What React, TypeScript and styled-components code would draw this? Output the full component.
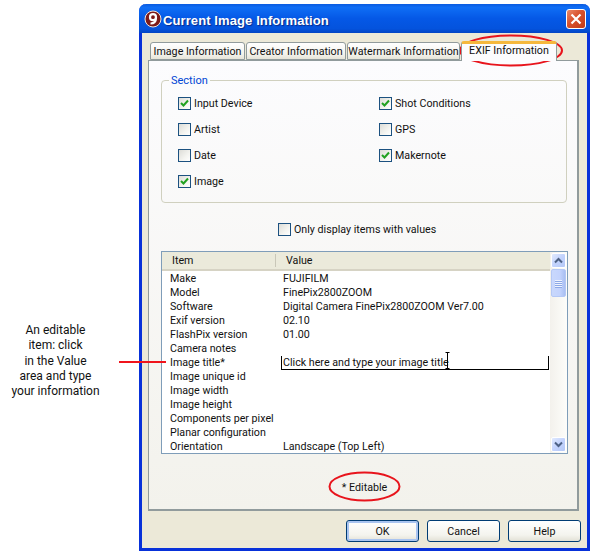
import React from "react";
import styled, { createGlobalStyle } from "styled-components";

const GlobalStyle = createGlobalStyle`
  html, body {
    margin: 0;
    padding: 0;
    background: #fff;
  }
  body {
    font-family: Roboto, "Liberation Sans", Arial, sans-serif;
    font-size: 10.7px;
    color: #111;
  }
`;

const Page = styled.div`
  position: relative;
  width: 594px;
  height: 555px;
  overflow: hidden;
  display: flex;
  padding: 4px 4px 4px 0;
  box-sizing: border-box;
`;

const Note = styled.div`
  width: 111px;
  margin-top: 319px;
  margin-right: 28px;
  flex: none;
  text-align: center;
  line-height: 15.3px;
  font-size: 12px;
`;

const Window = styled.div`
  width: 451px;
  height: 547px;
  flex: none;
  box-sizing: border-box;
  background: #ece9d8;
  border: solid #0831d9;
  border-width: 0 3px 3px 3px;
  border-radius: 7px 7px 0 0;
  display: flex;
  flex-direction: column;
`;

const TitleBar = styled.div`
  height: 29px;
  margin: 0 -3px;
  padding: 0 4px 0 5px;
  border-radius: 7px 7px 0 0;
  background: linear-gradient(180deg, #0a5be0 0%, #0f6ef5 12%, #0558e6 50%, #0453dd 85%, #0345c4 100%);
  display: flex;
  align-items: center;
  gap: 1px;
  flex: none;
`;

const TitleText = styled.span`
  flex: 1;
  padding-top: 3px;
  color: #fff;
  font-family: "Liberation Sans", Arial, sans-serif;
  font-weight: bold;
  font-size: 13px;
  letter-spacing: 0.1px;
  text-shadow: 1px 1px 1px #0a2a8a;
`;

const CloseButton = styled.div`
  width: 20px;
  height: 20px;
  box-sizing: border-box;
  border: 1px solid #fff;
  border-radius: 3px;
  background: linear-gradient(135deg, #ea8a6b 0%, #d9512c 45%, #c03a18 100%);
  display: flex;
  align-items: center;
  justify-content: center;
`;

const Content = styled.div`
  flex: 1;
  padding: 8px 6px 0 6px;
  display: flex;
  flex-direction: column;
`;

const TabRow = styled.div`
  display: flex;
  padding-left: 2px;
  gap: 1px;
  height: 19px;
  align-items: flex-end;
  position: relative;
  z-index: 1;
`;

const Tab = styled.div<{ $width: number; $active?: boolean }>`
  width: ${(p) => p.$width}px;
  height: ${(p) => (p.$active ? 20 : 18)}px;
  margin-bottom: ${(p) => (p.$active ? -1 : 0)}px;
  padding-top: ${(p) => (p.$active ? 0 : 1)}px;
  padding-bottom: ${(p) => (p.$active ? 5 : 0)}px;
  box-sizing: border-box;
  border: 1px solid #919b9c;
  border-bottom: ${(p) => (p.$active ? "none" : "1px solid #919b9c")};
  border-top: ${(p) => (p.$active ? "3px solid #f5b83d" : "1px solid #919b9c")};
  border-radius: 3px 3px 0 0;
  background: ${(p) => (p.$active ? "#fcfcfe" : "linear-gradient(180deg, #fff 0%, #f3f2ec 70%, #e6e4d8 100%)")};
  display: flex;
  align-items: center;
  justify-content: center;
  white-space: nowrap;
`;

const Panel = styled.div`
  height: 451px;
  margin-right: 2px;
  box-sizing: border-box;
  border: 1px solid #919b9c;
  border-right-width: 2px;
  border-bottom-width: 2px;
  background: linear-gradient(180deg, #fcfcfe 0%, #f3f2ec 100%);
  padding: 19px 9px 0 12px;
  display: flex;
  flex-direction: column;
`;

const Section = styled.fieldset`
  margin: 0 1px 0 0;
  height: 123px;
  box-sizing: border-box;
  border: 1px solid #d0d0bf;
  border-radius: 4px;
  position: relative;
  display: grid;
  grid-template-columns: 201px 1fr;
  grid-auto-rows: 26px;
  padding: 10px 0 0 16px;
  align-content: start;
`;

const SectionTitle = styled.div`
  position: absolute;
  top: -7px;
  left: 7px;
  padding: 0 2px;
  background: #fbfbfc;
  color: #0046d5;
  font-size: 11px;
`;

const CheckRow = styled.label`
  display: flex;
  align-items: center;
  gap: 3px;
  height: 13px;
  margin-top: 6px;
`;

const Box = styled.span`
  width: 13px;
  height: 13px;
  flex: none;
  box-sizing: border-box;
  border: 1px solid #1c5180;
  background: linear-gradient(135deg, #dcdcd7 0%, #f4f4f0 60%, #fff 100%);
  display: flex;
  align-items: center;
  justify-content: center;
`;

const OnlyRow = styled(CheckRow)`
  margin: 20px 0 0 117px;
`;

const ListBox = styled.div`
  margin-top: 15px;
  height: 203px;
  box-sizing: border-box;
  border: 1px solid #7f9db9;
  background: #fff;
  display: flex;
  overflow: hidden;
`;

const ListMain = styled.div`
  flex: 1;
  min-width: 0;
  display: flex;
  flex-direction: column;
`;

const ListHeader = styled.div`
  height: 19px;
  flex: none;
  box-sizing: border-box;
  background: #ebeadb;
  border-bottom: 2px solid #d6d3c4;
  display: grid;
  grid-template-columns: 113px 1fr;
  align-items: center;
`;

const HeaderCell = styled.div<{ $divider?: boolean }>`
  padding-left: 10px;
  height: 13px;
  line-height: 13px;
  border-left: ${(p) => (p.$divider ? "1px solid #c9c7b8" : "none")};
`;

const Rows = styled.div`
  padding-top: 1px;
`;

const Row = styled.div`
  height: 14px;
  line-height: 14px;
  display: grid;
  grid-template-columns: 113px 1fr;
  padding-left: 8px;
  white-space: nowrap;
`;

const EditCell = styled.div`
  margin: 0 1px 0 -2px;
  padding-left: 1px;
  height: 14px;
  box-sizing: border-box;
  border: solid #000;
  border-width: 0 1px 1px 1px;
  line-height: 14px;
`;

const Scrollbar = styled.div`
  width: 17px;
  flex: none;
  background: linear-gradient(90deg, #f3f1ec 0%, #fdfdfa 100%);
  display: flex;
  flex-direction: column;
  padding: 1px;
  box-sizing: border-box;
  gap: 1px;
`;

const ScrollButton = styled.div`
  width: 15px;
  height: 15px;
  box-sizing: border-box;
  border: 1px solid #fff;
  border-radius: 2px;
  background: linear-gradient(135deg, #e1eafe 0%, #c3d3fd 50%, #b4c8f6 100%);
  display: flex;
  align-items: center;
  justify-content: center;
  flex: none;
`;

const Thumb = styled(ScrollButton)`
  height: 28px;
  border-color: #b4c8f6;
  flex-direction: column;
  gap: 1px;
  background: linear-gradient(90deg, #c9d8fc 0%, #c3d3fd 60%, #a9bff2 100%);
`;

const Grip = styled.div`
  width: 7px;
  height: 1px;
  background: #eef3fe;
  box-shadow: 0 1px 0 #8ca8e6;
`;

const Spacer = styled.div`
  flex: 1;
`;

const EditableLine = styled.div`
  margin-top: 27px;
  text-align: center;
`;

const ButtonRow = styled.div`
  display: flex;
  justify-content: flex-end;
  gap: 8px;
  margin-top: 9px;
`;

const DialogButton = styled.div<{ $default?: boolean }>`
  width: 73px;
  height: 22px;
  box-sizing: border-box;
  border: 1px solid #003c74;
  border-radius: 3px;
  background: linear-gradient(180deg, #fff 0%, #f4f4ee 70%, #e3e1d6 100%);
  box-shadow: ${(p) => (p.$default ? "inset 0 0 0 2px #a9c4f0" : "none")};
  display: flex;
  align-items: center;
  justify-content: center;
`;

const Callout = styled.svg`
  position: absolute;
  left: 0;
  top: 0;
  pointer-events: none;
`;

const items: [string, string][] = [
  ["Make", "FUJIFILM"],
  ["Model", "FinePix2800ZOOM"],
  ["Software", "Digital Camera FinePix2800ZOOM Ver7.00"],
  ["Exif version", "02.10"],
  ["FlashPix version", "01.00"],
  ["Camera notes", ""],
  ["Image title*", "@edit"],
  ["Image unique id", ""],
  ["Image width", ""],
  ["Image height", ""],
  ["Components per pixel", ""],
  ["Planar configuration", ""],
  ["Orientation", "Landscape (Top Left)"],
];

function Check({ on }: { on?: boolean }) {
  return (
    <Box>
      {on && (
        <svg width="9" height="9" viewBox="0 0 9 9">
          <path d="M1 4l2.5 2.5L8 1.5" fill="none" stroke="#21a121" strokeWidth="2" />
        </svg>
      )}
    </Box>
  );
}

function Arrow({ up }: { up?: boolean }) {
  return (
    <svg width="9" height="7" viewBox="0 0 9 7">
      <path
        d={up ? "M1 5.5l3.5-3.5L8 5.5" : "M1 1.5L4.5 5 8 1.5"}
        fill="none"
        stroke="#4d6185"
        strokeWidth="2"
      />
    </svg>
  );
}

export default function App() {
  return (
    <Page>
      <GlobalStyle />
      <Note>
        An editable
        <br />
        item: click
        <br />
        in the Value
        <br />
        area and type
        <br />
        your information
      </Note>
      <Window>
        <TitleBar>
          <svg width="18" height="18" viewBox="0 0 18 18">
            <circle cx="9" cy="9" r="8" fill="#7d1a1a" stroke="#f3e6dc" strokeWidth="1" />
            <circle cx="9" cy="7.2" r="3" fill="none" stroke="#fff" strokeWidth="2.2" />
            <path d="M12 7.5c0 4-2 6-5.5 6" fill="none" stroke="#fff" strokeWidth="2.2" />
          </svg>
          <TitleText>Current Image Information</TitleText>
          <CloseButton>
            <svg width="12" height="12" viewBox="0 0 12 12">
              <path d="M1.5 1.5l9 9M10.5 1.5l-9 9" stroke="#fff" strokeWidth="2.2" />
            </svg>
          </CloseButton>
        </TitleBar>
        <Content>
          <TabRow>
            <Tab $width={95}>Image Information</Tab>
            <Tab $width={100}>Creator Information</Tab>
            <Tab $width={113}>Watermark Information</Tab>
            <Tab $width={96} $active>
              EXIF Information
            </Tab>
          </TabRow>
          <Panel>
            <Section>
              <SectionTitle>Section</SectionTitle>
              <CheckRow>
                <Check on />
                Input Device
              </CheckRow>
              <CheckRow>
                <Check on />
                Shot Conditions
              </CheckRow>
              <CheckRow>
                <Check />
                Artist
              </CheckRow>
              <CheckRow>
                <Check />
                GPS
              </CheckRow>
              <CheckRow>
                <Check />
                Date
              </CheckRow>
              <CheckRow>
                <Check on />
                Makernote
              </CheckRow>
              <CheckRow>
                <Check on />
                Image
              </CheckRow>
            </Section>
            <OnlyRow>
              <Check />
              Only display items with values
            </OnlyRow>
            <ListBox>
              <ListMain>
                <ListHeader>
                  <HeaderCell>Item</HeaderCell>
                  <HeaderCell $divider>Value</HeaderCell>
                </ListHeader>
                <Rows>
                  {items.map(([name, value]) => (
                    <Row key={name}>
                      <span>{name}</span>
                      {value === "@edit" ? (
                        <EditCell>Click here and type your image title</EditCell>
                      ) : (
                        <span>{value}</span>
                      )}
                    </Row>
                  ))}
                </Rows>
              </ListMain>
              <Scrollbar>
                <ScrollButton>
                  <Arrow up />
                </ScrollButton>
                <Thumb>
                  <Grip />
                  <Grip />
                  <Grip />
                  <Grip />
                </Thumb>
                <Spacer />
                <ScrollButton>
                  <Arrow />
                </ScrollButton>
              </Scrollbar>
            </ListBox>
            <EditableLine>* Editable</EditableLine>
          </Panel>
          <ButtonRow>
            <DialogButton $default>OK</DialogButton>
            <DialogButton>Cancel</DialogButton>
            <DialogButton>Help</DialogButton>
          </ButtonRow>
        </Content>
      </Window>
      <Callout width="594" height="555" viewBox="0 0 594 555">
        <ellipse cx="511" cy="50.5" rx="51" ry="15" fill="none" stroke="#e8141c" strokeWidth="2" />
        <ellipse cx="364.5" cy="486.5" rx="35" ry="14" fill="none" stroke="#e8141c" strokeWidth="2" />
        <line x1="119" y1="362" x2="166" y2="362" stroke="#f0141c" strokeWidth="2" />
        <path
          d="M445.5 352.5h4M445.5 368.5h4M447.5 352.5v16"
          fill="none"
          stroke="#000"
          strokeWidth="1"
        />
      </Callout>
    </Page>
  );
}
